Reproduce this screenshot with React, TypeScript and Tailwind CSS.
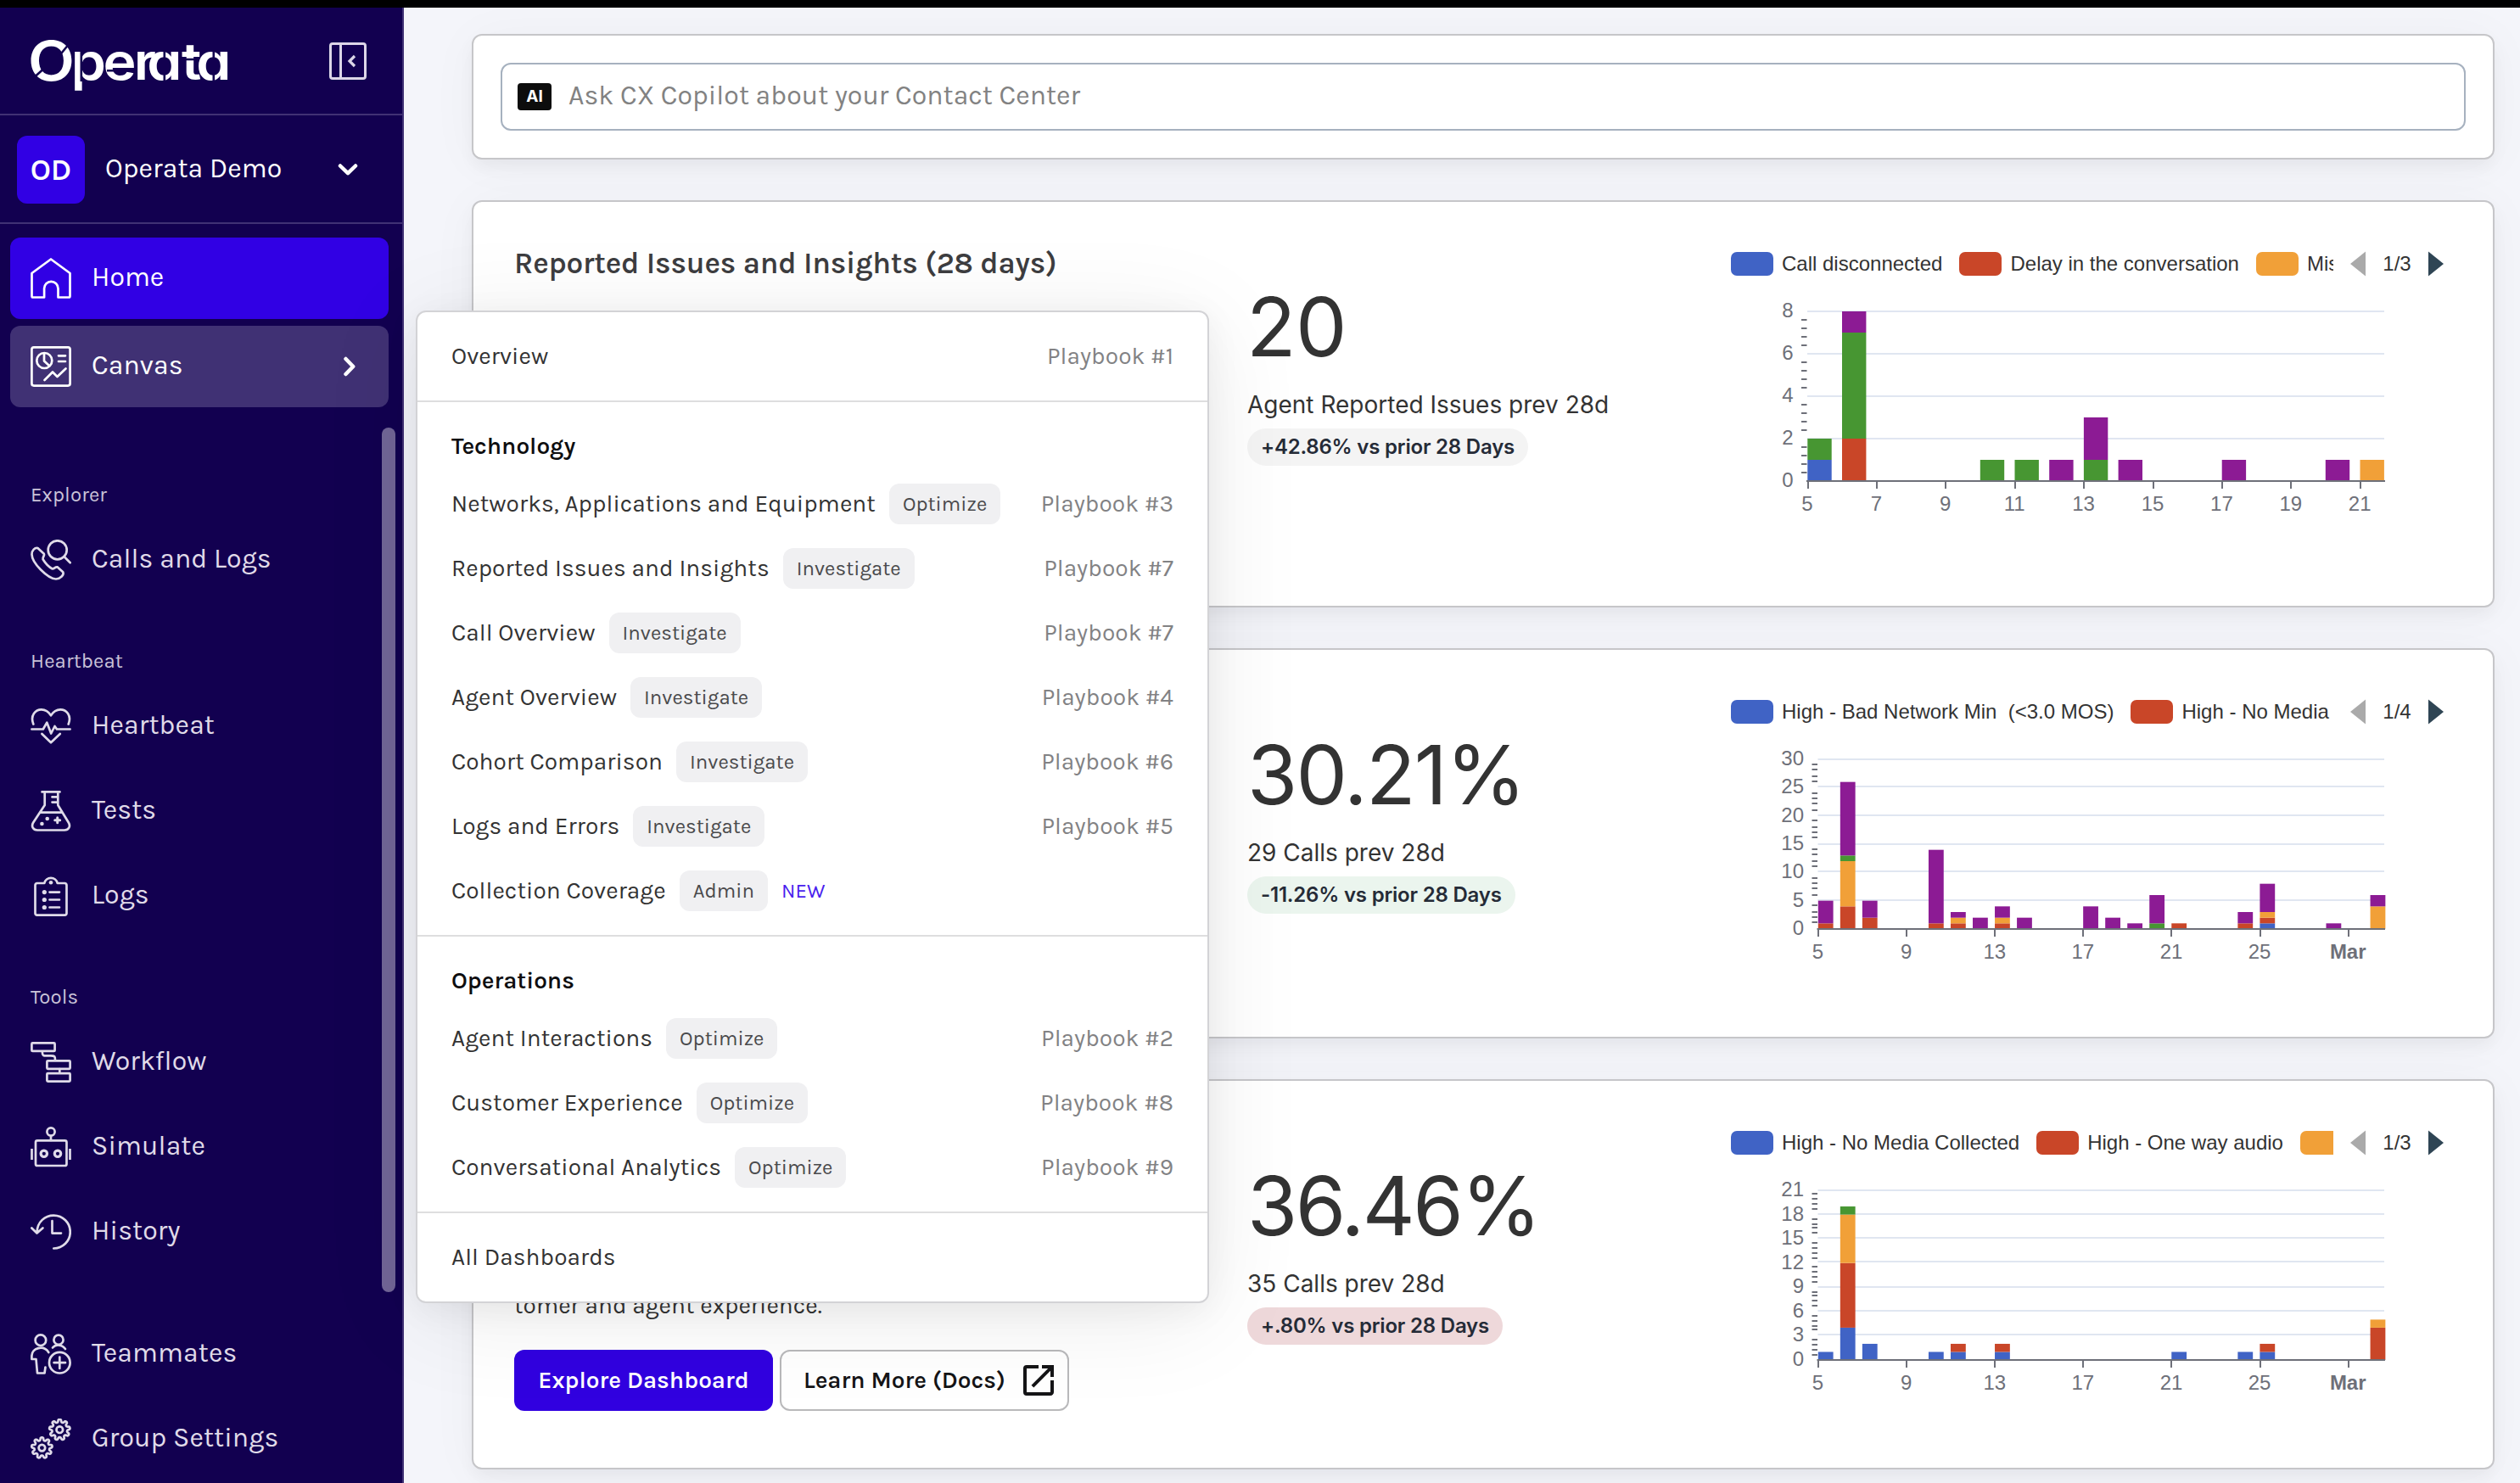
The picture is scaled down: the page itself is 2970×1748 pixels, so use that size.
import type { ReactNode } from "react";
import { MdOpenInNew } from "react-icons/md";

const COLORS: Record<string, string> = {
    b: "#4063c5",
    r: "#c94628",
    o: "#f1a038",
    g: "#479632",
    p: "#8c1b94",
};

type Bar = { day: number; parts: [string, number][] };

type ChartProps = {
    legend: [string, string][];
    pages: string;
    left: number;
    max: number;
    step: number;
    dayWidth: number;
    barWidth: number;
    labels: [number, string][];
    bars: Bar[];
};

// points of a small cog outline, 9 teeth
const cog = (cx: number, cy: number) => {
    const pts: string[] = [];
    for(let i = 0; i < 90; i++){
        const a = (i / 90) * Math.PI * 2;
        const r = 10.6 + 1.7 * Math.tanh(2.2 * Math.cos(a * 9));
        pts.push(`${(cx + r * Math.sin(a)).toFixed(2)},${(cy - r * Math.cos(a)).toFixed(2)}`);
    }
    return pts.join(" ");
};

const Icon = ({children}:{children:ReactNode})=>(
    <svg className="size-12 shrink-0" viewBox="0 0 48 48" fill="none" stroke="currentColor" strokeWidth="2.7" strokeLinecap="round" strokeLinejoin="round">
        {children}
    </svg>
);

const icons: Record<string, ReactNode> = {
    home: <path d="M24 1.5 46.5 18v27a1.5 1.5 0 0 1-1.5 1.5H32.5V36a8.2 8.2 0 0 0-16.4 0v10.5H3A1.5 1.5 0 0 1 1.5 45V18Z" />,
    canvas: <>
        <rect x="1.4" y="1.4" width="45.2" height="45.2" rx="2.5" />
        <circle cx="16.3" cy="17" r="9" />
        <path d="M16 8.5V17.5L22 23M33 11.3h8M33 18h8M16.5 40 26 30.5l5.5 5.5 10-9.5" />
    </>,
    calls: <>
        <circle cx="31.7" cy="12.3" r="11" />
        <path d="M39.5 20l7.2 7.2" />
        <path d="M1.5 17.5C1.5 12.5 5 9.3 8.5 10L15.8 16.7C17.2 18.7 13.8 20.5 14.6 23.3C17.5 28 21.5 32.5 25.7 34.4C28.3 34.8 28.8 31.7 31.8 32.4L38.2 38.2C40 41.5 35 46.3 30 46.5C24 46.5 17.5 41 12 35.5C6 29.5 1.7 24 1.5 17.5Z" />
    </>,
    heartbeat: <>
        <path d="M3.3 21.5C-.8 11 6 4.3 12.8 4.3C17.5 4.3 21.5 7.3 24 11.3C26.5 7.3 30.5 4.3 35.2 4.3C42 4.3 48.8 11 44.7 21.5" />
        <path d="M1.4 27.5H14.8L19.3 19.7L24.2 32.5L28.5 24L31 27.5H46.6M13.4 33 24 43.3 34.8 33" />
    </>,
    tests: <>
        <path d="M13.5 1.4H34.5M16.7 1.4V17L3.2 37.5C.5 42 3 46.5 8 46.5H40C45 46.5 47.5 42 44.8 37.5L32.3 17V1.4M11 25.7H37M25.5 7.4h6.8M25.5 13.6h6.8" />
        <path d="M31.7 31.7v6M28.7 34.7h6" strokeWidth="3" />
        <circle cx="13.4" cy="39" r="2.3" fill="currentColor" stroke="none" />
        <circle cx="19.7" cy="33" r="2.3" fill="currentColor" stroke="none" />
    </>,
    logs: <>
        <path d="M16.3 9H7.5A2.5 2.5 0 0 0 5.5 11.5V44.5A2.2 2.2 0 0 0 7.7 46.6H40.3A2.2 2.2 0 0 0 42.5 44.5V11.5A2.5 2.5 0 0 0 40.5 9H31.7A7.9 7.9 0 0 0 16.3 9Z" />
        <path d="M22.5 19.6h11.5M22.5 28.5h11.5M22.5 37.5h11.5" />
        <g fill="currentColor" stroke="none">
            <circle cx="24" cy="8.3" r="2.3" />
            <circle cx="16.3" cy="19.6" r="2.6" />
            <circle cx="16.3" cy="28.5" r="2.6" />
            <circle cx="16.3" cy="37.5" r="2.6" />
        </g>
    </>,
    workflow: <>
        <rect x="1.4" y="1.4" width="27.2" height="9.5" rx="1" />
        <rect x="19.4" y="22.3" width="27.2" height="9.5" rx="1" />
        <rect x="19.4" y="37.1" width="27.2" height="9.5" rx="1" />
        <path d="M13.8 11.5C13.8 16.5 15.5 16.4 19 16.4H24C28.5 16.4 29 17 29 21.5M34.3 32v4.5" />
    </>,
    simulate: <>
        <circle cx="24" cy="6" r="4.6" />
        <path d="M24 11v5" />
        <rect x="6" y="16.4" width="36.5" height="29.6" rx="2" />
        <circle cx="15.8" cy="31.8" r="3.7" strokeWidth="3.2" />
        <circle cx="32" cy="31.8" r="3.7" strokeWidth="3.2" />
        <path d="M1.5 26v13M46.5 26v13" strokeLinecap="butt" />
    </>,
    history: <path d="M7.5 24.5C8 12 17 4.6 27.3 4.6A19.4 19.4 0 0 1 27.3 43.5M1.4 19.5 7.5 25.5 14.4 19.5M25.5 11V25.6H36" />,
    teammates: <>
        <circle cx="11.9" cy="7.7" r="6.3" />
        <circle cx="33" cy="7.2" r="5.6" />
        <path d="M26 16.5C29.5 12.3 37 12.3 41 18M21.3 22C15.5 13 1.5 16.5 1.4 26V30H6.5L8 46.5H16.5L17.5 39.5" />
        <circle cx="34.3" cy="34.2" r="12.3" />
        <path d="M34.3 27.5v13.4M27.6 34.2H41" />
    </>,
    settings: <>
        <polygon points={cog(34.3, 13.2)} />
        <polygon points={cog(13.4, 34.6)} />
        <circle cx="34.3" cy="13.2" r="3.8" />
        <circle cx="13.4" cy="34.6" r="3.8" />
    </>,
};

const NavItem = ({icon, label}:{icon:string; label:string})=>(
    <div className="flex h-[100px] items-center gap-6 pl-9 text-[#e0dbe9]">
        <Icon>{icons[icon]}</Icon>
        <span className="-mt-[3px] text-[32px] tracking-[0.1px] whitespace-nowrap">{label}</span>
    </div>
);

const NavLabel = ({children}:{children:ReactNode})=>(
    <div className="flex h-[96px] items-end pb-[9px] pl-9 text-[24px] tracking-[0.1px] text-[#c9c3d8]">{children}</div>
);

// wordmark with stencil cuts laid over the letters
const Logo = ()=>(
    <svg className="h-16 w-[240px] overflow-visible" viewBox="0 0 240 64" fill="none">
        <text transform="scale(1.1 1)" className="fill-white font-['Inter'] text-[60px] font-semibold [font-feature-settings:'cv11']">
            <tspan x="-2.8" y="47.3" className="text-[65px]">O</tspan>
            <tspan x="43.4 77.8 110.6 124.8 161.8 177.6" y="46.3">perata</tspan>
        </text>
        <g stroke="#120050" strokeWidth="2.6">
            <path d="M34.5 17 43.5 6M5 42.5 15 33.5" />
            <path d="M59.8 12V48M157.8 12V23M157.8 38V50M215.8 12V23M215.8 38V50M178 22H199M90 35.2H123" />
        </g>
    </svg>
);

const Sidebar = ()=>(
    <div className="flex w-[476px] shrink-0 flex-col border-r-2 border-[#403174] bg-[#120050] font-['Karla','Open_Sans',sans-serif]">
        <div className="flex h-[127px] shrink-0 items-start border-b-2 border-[#403174] pl-9 pt-[39px]">
            <Logo />
            <svg className="ml-[112px] mt-[2px] size-11" viewBox="0 0 44 44" fill="none" stroke="#dcd6e8" strokeWidth="3">
                <rect x="1.5" y="1.5" width="41" height="41" rx="2.5" />
                <path d="M13.5 1.5v41" />
                <path d="M30 16l-6 6 6 6" strokeWidth="3.2" />
            </svg>
        </div>
        <div className="flex h-[128px] shrink-0 items-center border-b-2 border-[#403174] pl-5 pt-[2px]">
            <div className="flex size-20 items-center justify-center rounded-xl bg-[#3100e4] text-[36px] font-semibold text-white">OD</div>
            <span className="-mt-[2px] ml-6 w-[274px] text-[32px] tracking-[0.1px] text-white">Operata Demo</span>
            <svg className="h-4 w-6" viewBox="0 0 24 16" fill="none" stroke="#fff" strokeWidth="4.5" strokeLinecap="round" strokeLinejoin="round">
                <path d="M3 3.5l9 8.7 9-8.7" />
            </svg>
        </div>
        <div className="flex flex-col gap-2 px-3 pt-4">
            <div className="flex h-24 w-[446px] items-center gap-6 rounded-xl bg-[#3100e4] pl-6 text-white">
                <Icon>{icons.home}</Icon>
                <span className="-mt-[3px] text-[32px]">Home</span>
            </div>
            <div className="flex h-24 w-[446px] items-center gap-6 rounded-xl bg-[#403174] pl-6 text-white">
                <Icon>{icons.canvas}</Icon>
                <span className="-mt-[3px] w-[275px] text-[32px] tracking-[0.1px]">Canvas</span>
                <svg className="-ml-[3px] h-6 w-4" viewBox="0 0 16 24" fill="none" stroke="#fff" strokeWidth="4.5" strokeLinecap="round" strokeLinejoin="round">
                    <path d="M3.5 3l8.7 9-8.7 9" />
                </svg>
            </div>
        </div>
        <div className="mt-6 flex h-[1019px] shrink-0">
            <div className="w-[450px] pt-[10px]">
                <NavLabel>Explorer</NavLabel>
                <NavItem icon="calls" label="Calls and Logs" />
                <NavLabel>Heartbeat</NavLabel>
                <NavItem icon="heartbeat" label="Heartbeat" />
                <NavItem icon="tests" label="Tests" />
                <NavItem icon="logs" label="Logs" />
                <NavLabel>Tools</NavLabel>
                <NavItem icon="workflow" label="Workflow" />
                <NavItem icon="simulate" label="Simulate" />
                <NavItem icon="history" label="History" />
            </div>
            <div className="h-full w-4 rounded-full bg-[#716596]" />
        </div>
        <div className="pt-[23px]">
            <NavItem icon="teammates" label="Teammates" />
            <NavItem icon="settings" label="Group Settings" />
        </div>
    </div>
);

const Chart = ({legend, pages, left, max, step, dayWidth, barWidth, labels, bars}:ChartProps)=>{
    const right = 770;
    const unit = 200 / max;
    const y = (v:number)=>240 - v * unit;
    const snap = (v:number)=>Math.floor((y(v) + 0.01) / 2) * 2;
    const lines = Array.from({length: max / step + 1}, (_, i)=>i * step);
    const minors = Array.from({length: (max / step) * 5}, (_, i)=>i).filter((i)=>i % 5 !== 0).map((i)=>(i * step) / 5);

    return (
        <div className="pl-[10px] pt-[57px] font-['Liberation_Sans',sans-serif]">
            <div className="flex h-8 items-center">
                <div className="flex w-[710px] gap-5 overflow-hidden">
                    {legend.map(([color, name])=>(
                        <div key={name} className="flex shrink-0 items-center gap-[10px]">
                            <div className="h-7 w-[50px] rounded-[7px]" style={{background: COLORS[color]}} />
                            <span className="text-[24px] leading-8 whitespace-pre text-[#333]">{name}</span>
                        </div>
                    ))}
                </div>
                <svg className="ml-5 h-[30px] w-[18px]" viewBox="0 0 18 30"><path d="M18 .5v29L0 15Z" fill="#aaa" /></svg>
                <span className="mx-5 w-[34px] text-center text-[24px] text-[#333]">{pages}</span>
                <svg className="h-[30px] w-[18px]" viewBox="0 0 18 30"><path d="M0 .5v29L18 15Z" fill="#2f4554" /></svg>
            </div>
            <svg className="h-[300px] w-[860px]" viewBox="0 0 860 300">
                {lines.slice(1).map((v)=>(
                    <rect key={v} x={left} y={snap(v) - 1} width={right - left} height="2" fill="#e0e6f1" />
                ))}
                {minors.map((v)=>(
                    <rect key={v} x={left - 7} y={snap(v) - 1} width="6.5" height="2" fill="#6e7079" />
                ))}
                {bars.map(({day, parts})=>{
                    let total = 0;
                    return parts.map(([color, n])=>{
                        total += n;
                        return <rect key={`${day}-${color}`} x={left + 0.3 + day * dayWidth} y={y(total)} width={barWidth} height={n * unit} fill={COLORS[color]} />;
                    });
                })}
                <rect x={left - 1} y="239" width={right - left + 2} height="2" fill="#6e7079" />
                {labels.map(([day, text])=>(
                    <g key={text}>
                        <rect x={Math.floor(left + day * dayWidth)} y="241" width="2" height="8" fill="#6e7079" />
                        <text x={left + day * dayWidth} y="275" textAnchor="middle" fill="#6e7079" fontSize="24" fontWeight={text === "Mar" ? 700 : 400}>{text}</text>
                    </g>
                ))}
                {lines.map((v)=>(
                    <text key={v} x={left - 16.5} y={y(v) + 7} textAnchor="end" fill="#6e7079" fontSize="24">{v}</text>
                ))}
            </svg>
        </div>
    );
};

const weeks: [number, string][] = [[0, "5"], [4, "9"], [8, "13"], [12, "17"], [16, "21"], [20, "25"], [24, "Mar"]];

const Badge = ({children}:{children:ReactNode})=>(
    <span className="flex h-12 items-center rounded-xl bg-[#f0f0f2] px-4 pb-px text-[24px] tracking-[0.05px] text-[#4a4a4c]">{children}</span>
);

const MenuRow = ({name, tag, note, fresh}:{name:string; tag?:string; note?:string; fresh?:boolean})=>(
    <div className="flex h-[76px] items-center gap-4 whitespace-nowrap">
        <span className="text-[28px] tracking-[0.07px] text-[#333]">{name}</span>
        {tag ? <Badge>{tag}</Badge> : null}
        {fresh ? <span className="text-[24px] text-[#4a1fee]">NEW</span> : null}
        <span className="ml-auto text-[28px] tracking-[0.07px] text-[#828284]">{note}</span>
    </div>
);

const MenuGroup = ({title, children}:{title:string; children:ReactNode})=>(
    <div className="border-b-2 border-[#dededf] px-10 pb-[14px] pt-[22px]">
        <div className="flex h-[60px] items-center text-[28px] font-semibold text-[#0e0e10]">{title}</div>
        {children}
    </div>
);

const CanvasMenu = ()=>(
    <div className="absolute left-[490px] top-[366px] w-[935px] rounded-xl border-2 border-[#d3d3d6] bg-white font-['Karla','Open_Sans',sans-serif] shadow-[0_16px_120px_rgba(0,0,0,0.08),0_8px_40px_rgba(0,0,0,0.06)]">
        <div className="border-b-2 border-[#dededf] px-10 py-[14px]">
            <MenuRow name="Overview" note="Playbook #1" />
        </div>
        <MenuGroup title="Technology">
            <MenuRow name="Networks, Applications and Equipment" tag="Optimize" note="Playbook #3" />
            <MenuRow name="Reported Issues and Insights" tag="Investigate" note="Playbook #7" />
            <MenuRow name="Call Overview" tag="Investigate" note="Playbook #7" />
            <MenuRow name="Agent Overview" tag="Investigate" note="Playbook #4" />
            <MenuRow name="Cohort Comparison" tag="Investigate" note="Playbook #6" />
            <MenuRow name="Logs and Errors" tag="Investigate" note="Playbook #5" />
            <MenuRow name="Collection Coverage" tag="Admin" fresh />
        </MenuGroup>
        <MenuGroup title="Operations">
            <MenuRow name="Agent Interactions" tag="Optimize" note="Playbook #2" />
            <MenuRow name="Customer Experience" tag="Optimize" note="Playbook #8" />
            <MenuRow name="Conversational Analytics" tag="Optimize" note="Playbook #9" />
        </MenuGroup>
        <div className="px-10 py-[14px]">
            <MenuRow name="All Dashboards" />
        </div>
    </div>
);

const card = "shrink-0 rounded-xl border-2 border-[#c6c6c9] bg-white shadow-[0_10px_20px_-2px_rgba(0,0,0,0.05),0_4px_60px_rgba(40,0,60,0.035)]";

const Stat = ({value, valueClass, caption, pill, pillClass}:{value:string; valueClass:string; caption:string; pill:string; pillClass:string})=>(
    <div className="w-[560px] pt-[99px] font-['Inter',sans-serif]">
        <div className={`text-[96px] leading-none text-[#333] ${valueClass}`}>{value}</div>
        <div className="mt-6 text-[28px] leading-10 text-[#333]">{caption}</div>
        <div className={`mt-2 flex h-11 w-fit items-center rounded-full px-4 text-[24px] font-semibold tracking-[-0.2px] text-[#252b37] ${pillClass}`}>{pill}</div>
    </div>
);

const App = ()=>{
    return (
        <div className="relative flex h-[1748px] w-[2970px] flex-col overflow-hidden bg-[#f4f5fa]">
            <div className="h-[9px] shrink-0 bg-black" />
            <div className="flex min-h-0 flex-1">
                <Sidebar />
                <div className="flex flex-1 flex-col gap-12 pl-20 pr-[30px] pt-[31px]">
                    <div className={`h-[148px] px-8 py-8 ${card}`}>
                        <div className="flex h-20 items-center rounded-xl border-2 border-[#a6b1bf] pl-[18px]">
                            <div className="flex h-8 w-10 items-center justify-center rounded-[4px] bg-[#0d0d0d] font-['Inter',sans-serif] text-[19px] font-bold text-white">AI</div>
                            <span className="-mt-[3px] ml-5 font-['Karla','Open_Sans',sans-serif] text-[32px] tracking-[0.04px] text-[#828282]">Ask CX Copilot about your Contact Center</span>
                        </div>
                    </div>
                    <div className={`flex h-[480px] ${card}`}>
                        <div className="w-[912px] pl-12 pt-[51px] font-['Karla','Open_Sans',sans-serif]">
                            <h2 className="text-[35.2px] leading-[44px] font-semibold tracking-[-0.2px] text-[#3d3d40]">Reported Issues and Insights (28 days)</h2>
                        </div>
                        <Stat value="20" valueClass="-ml-px tracking-[-0.5px]" caption="Agent Reported Issues prev 28d" pill="+42.86% vs prior 28 Days" pillClass="bg-[#f4f4f4]" />
                        <Chart
                            legend={[["b", "Call disconnected"], ["r", "Delay in the conversation"], ["o", "Miss"]]}
                            pages="1/3"
                            left={90}
                            max={8}
                            step={2}
                            dayWidth={40.7}
                            barWidth={28.4}
                            labels={[[0, "5"], [2, "7"], [4, "9"], [6, "11"], [8, "13"], [10, "15"], [12, "17"], [14, "19"], [16, "21"]]}
                            bars={[
                                {day: 0, parts: [["b", 1], ["g", 1]]},
                                {day: 1, parts: [["r", 2], ["g", 5], ["p", 1]]},
                                {day: 5, parts: [["g", 1]]},
                                {day: 6, parts: [["g", 1]]},
                                {day: 7, parts: [["p", 1]]},
                                {day: 8, parts: [["g", 1], ["p", 2]]},
                                {day: 9, parts: [["p", 1]]},
                                {day: 12, parts: [["p", 1]]},
                                {day: 15, parts: [["p", 1]]},
                                {day: 16, parts: [["o", 1]]},
                            ]}
                        />
                    </div>
                    <div className={`flex h-[460px] ${card}`}>
                        <div className="w-[912px]" />
                        <Stat value="30.21%" valueClass="tracking-[-1.7px]" caption="29 Calls prev 28d" pill="-11.26% vs prior 28 Days" pillClass="bg-[#ebf5ee]" />
                        <Chart
                            legend={[["b", "High - Bad Network Min  (<3.0 MOS)"], ["r", "High - No Media"]]}
                            pages="1/4"
                            left={102.5}
                            max={30}
                            step={5}
                            dayWidth={26.03}
                            barWidth={17.8}
                            labels={weeks}
                            bars={[
                                {day: 0, parts: [["r", 1], ["p", 4]]},
                                {day: 1, parts: [["r", 4], ["o", 8], ["g", 1], ["p", 13]]},
                                {day: 2, parts: [["r", 2], ["p", 3]]},
                                {day: 5, parts: [["r", 1], ["p", 13]]},
                                {day: 6, parts: [["r", 1], ["o", 1], ["p", 1]]},
                                {day: 7, parts: [["p", 2]]},
                                {day: 8, parts: [["r", 1], ["o", 1], ["p", 2]]},
                                {day: 9, parts: [["p", 2]]},
                                {day: 12, parts: [["p", 4]]},
                                {day: 13, parts: [["p", 2]]},
                                {day: 14, parts: [["p", 1]]},
                                {day: 15, parts: [["g", 1], ["p", 5]]},
                                {day: 16, parts: [["r", 1]]},
                                {day: 19, parts: [["r", 1], ["p", 2]]},
                                {day: 20, parts: [["b", 1], ["r", 1], ["o", 1], ["p", 5]]},
                                {day: 23, parts: [["p", 1]]},
                                {day: 25, parts: [["o", 4], ["p", 2]]},
                            ]}
                        />
                    </div>
                    <div className={`flex h-[460px] ${card}`}>
                        <div className="flex w-[912px] flex-col justify-end pb-[67px] pl-12 font-['Karla','Open_Sans',sans-serif]">
                            <p className="text-[28px] leading-10 tracking-[0.05px] text-[#333]">tomer and agent experience.</p>
                            <div className="mt-8 flex h-[72px] gap-2">
                                <button className="w-[305px] rounded-xl bg-[#3100e0] pb-px text-[28px] font-semibold text-white">Explore Dashboard</button>
                                <button className="flex w-[341px] items-center justify-between rounded-xl border-2 border-[#b9b9bb] pl-[26px] pr-[10px] text-[28px] font-semibold text-[#151517]">
                                    <span className="-mt-px">Learn More (Docs)</span>
                                    <MdOpenInNew className="size-12" />
                                </button>
                            </div>
                        </div>
                        <Stat value="36.46%" valueClass="tracking-[-2.5px]" caption="35 Calls prev 28d" pill="+.80% vs prior 28 Days" pillClass="bg-[#eed8da]" />
                        <Chart
                            legend={[["b", "High - No Media Collected"], ["r", "High - One way audio"], ["o", ""]]}
                            pages="1/3"
                            left={102.5}
                            max={21}
                            step={3}
                            dayWidth={26.03}
                            barWidth={17.8}
                            labels={weeks}
                            bars={[
                                {day: 0, parts: [["b", 1]]},
                                {day: 1, parts: [["b", 4], ["r", 8], ["o", 6], ["g", 1]]},
                                {day: 2, parts: [["b", 2]]},
                                {day: 5, parts: [["b", 1]]},
                                {day: 6, parts: [["b", 1], ["r", 1]]},
                                {day: 8, parts: [["b", 1], ["r", 1]]},
                                {day: 16, parts: [["b", 1]]},
                                {day: 19, parts: [["b", 1]]},
                                {day: 20, parts: [["b", 1], ["r", 1]]},
                                {day: 25, parts: [["r", 4], ["o", 1]]},
                            ]}
                        />
                    </div>
                </div>
            </div>
            <CanvasMenu />
        </div>
    );
};

export default App;
